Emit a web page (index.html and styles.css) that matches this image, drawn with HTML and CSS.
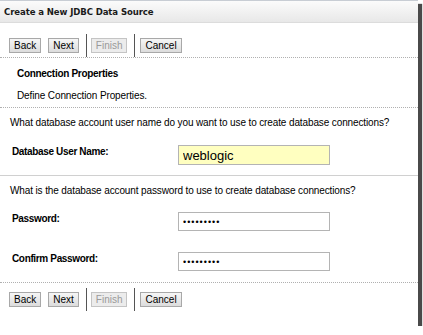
FILE: index.html
```html
<!DOCTYPE html>
<html lang="en">

<head>
    <meta charset="UTF-8">
    <title>Create a New JDBC Data Source</title>
    <link rel="stylesheet" href="styles.css">
</head>

<body>
    <div class="frame">
        <div class="title-bar">Create a New JDBC Data Source</div>

        <div class="button-bar">
            <button class="btn">Back</button>
            <button class="btn">Next</button>
            <span class="sep"></span>
            <button class="btn finish" disabled>Finish</button>
            <span class="sep"></span>
            <button class="btn cancel">Cancel</button>
        </div>

        <div class="section">
            <h2>Connection Properties</h2>
            <p>Define Connection Properties.</p>
        </div>

        <div class="group">
            <p class="question">What database account user name do you want to use to create database connections?</p>
            <div class="field first">
                <label>Database User Name:</label>
                <input type="text" class="input user" value="weblogic">
            </div>
        </div>

        <div class="group solid">
            <p class="question">What is the database account password to use to create database connections?</p>
            <div class="field">
                <label>Password:</label>
                <input type="password" class="input" value="weblogic1">
            </div>
            <div class="field">
                <label>Confirm Password:</label>
                <input type="password" class="input" value="weblogic1">
            </div>
        </div>

        <div class="button-bar bottom">
            <button class="btn">Back</button>
            <button class="btn">Next</button>
            <span class="sep"></span>
            <button class="btn finish" disabled>Finish</button>
            <span class="sep"></span>
            <button class="btn cancel">Cancel</button>
        </div>
    </div>
</body>

</html>
```

FILE: styles.css
```css
* {
    box-sizing: border-box;
    margin: 0;
}

body {
    background: #fff;
    font-family: "Liberation Sans", sans-serif;
    font-size: 10px;
    letter-spacing: -0.12px;
    line-height: 13px;
    color: #000;
}

.frame {
    width: 418px;
    height: 326px;
    background: #fff;
    border-top: 1px solid #c8cdd4;
    box-shadow: 4px 4px 1px #4a4a4a;
}

.title-bar {
    height: 22px;
    padding: 4px 4px;
    font-family: "DejaVu Sans Condensed", "Liberation Sans", sans-serif;
    font-weight: bold;
    font-size: 9.5px;
    letter-spacing: -0.1px;
    color: #1a1a1a;
    background: linear-gradient(#fbfbfb, #e8e8e8);
    border-bottom: 1px solid #dcdcdc;
}

.button-bar {
    display: flex;
    align-items: center;
    gap: 7px;
    padding: 10px 9px 0;
    height: 35px;
    border-bottom: 1px dotted #b0b0b0;
}

.button-bar.bottom {
    border-bottom: none;
    height: 32px;
    padding-top: 0;
}

.btn {
    font-family: "Liberation Sans", sans-serif;
    font-size: 10px;
    letter-spacing: 0;
    height: 15px;
    padding: 0 4px;
    line-height: 13px;
    background: linear-gradient(#f6f6f6, #dcdcdc);
    border: 1px solid #a8a8a8;
    color: #000;
}

.btn:disabled {
    color: #9a9a9a;
    background: #ececec;
    border-color: #c4c4c4;
}

.finish {
    margin-left: -3px;
}

.cancel {
    margin-left: -2px;
}

.sep {
    width: 1px;
    height: 23px;
    background: #555;
}

.section {
    padding: 9px 17px 0;
    height: 50px;
    border-bottom: 1px dotted #b0b0b0;
}

.section h2 {
    font-size: 10px;
    font-weight: bold;
    letter-spacing: -0.3px;
    height: 22px;
}

.group {
    padding: 8px 10px 0;
    border-bottom: 1px solid #d0d0d0;
}

.group.solid {
    padding-bottom: 5px;
    border-bottom: 1px dotted #b0b0b0;
}

.question {
    height: 13px;
    white-space: nowrap;
}

.field {
    display: flex;
    align-items: flex-start;
    height: 40px;
    padding: 15px 0 0 2px;
}

.field.first {
    height: 46px;
    padding-top: 16px;
}

.field label {
    width: 166px;
    font-weight: bold;
    letter-spacing: -0.35px;
}

.input {
    width: 152px;
    height: 20px;
    border: 1px solid #b4b4b4;
    padding: 0 4px;
    font-family: "Liberation Sans", sans-serif;
    font-size: 13px;
}

.input[type="password"] {
    height: 19px;
    font-size: 9px;
    letter-spacing: 1px;
}

.input.user {
    background: #ffffc0;
}
```
